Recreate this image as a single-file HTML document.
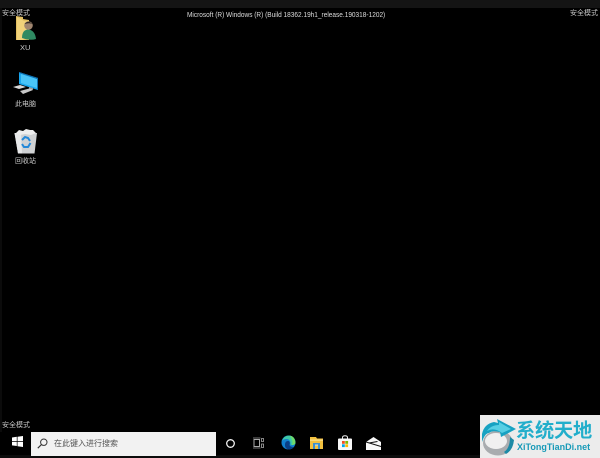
<!DOCTYPE html>
<html>
<head>
<meta charset="utf-8">
<style>
html,body{margin:0;padding:0;background:#000;}
#r{position:relative;width:600px;height:458px;overflow:hidden;background:#000;font-family:"Liberation Sans","Noto Sans CJK SC",sans-serif;color:#c8c8c8;}
.t{position:absolute;white-space:nowrap;font-size:7px;line-height:10px;}
svg{position:absolute;overflow:visible;}
</style>
</head>
<body>
<div id="r">
<div style="position:absolute;left:0;top:0;width:600px;height:8px;background:#141414"></div>
<div style="position:absolute;left:0;top:8px;width:2px;height:424px;background:#0b0b0b"></div>
<div style="position:absolute;left:0;top:455px;width:600px;height:3px;background:#0c0c0c"></div>

<div class="t" style="left:2px;top:9px">安全模式</div>
<div class="t" style="left:187px;top:9.500px;font-size:7.600px;color:#dcdcdc;transform:scaleX(.857);transform-origin:0 0">Microsoft (R) Windows (R) (Build 18362.19h1_release.190318-1202)</div>
<div class="t" style="left:570px;top:9px">安全模式</div>
<div class="t" style="left:2px;top:421px">安全模式</div>

<!-- XU folder icon -->
<svg style="left:14px;top:14px" width="24" height="28" viewBox="0 0 24 28">
<path d="M2 2 L9 3 L9 5 L15 6 L15 26 L2 26Z" fill="#e2bf61"/>
<path d="M3 3 L10 7 L15 8 L15 23 L9 26 L3 26Z" fill="#f0d27a"/>
<path d="M8 24 Q8 16 14 15.500 Q21 16 22 25 Q16 27 8 24Z" fill="#2f8a62"/>
<circle cx="14.500" cy="11.500" r="4.300" fill="#a08670"/>
<path d="M10.500 10 Q14 5.500 18.500 10 Q15 8.500 10.500 10Z" fill="#332a25"/>
</svg>
<div class="t" style="left:20px;top:43px;font-size:7.500px">XU</div>

<!-- PC icon -->
<svg style="left:12px;top:71px" width="28" height="26" viewBox="0 0 28 26">
<path d="M7 1 L26 7 L26 19 L7 13Z" fill="#19a6ee"/>
<path d="M9 3 L25 8 L25 17 L9 12Z" fill="#49c4f7"/>
<path d="M7 1 L26 7 L26 19 L25 19 L25 8 L7 2Z" fill="#0f6fb0"/>
<path d="M1 16 L8 14 L14 16 L7 18Z" fill="#d8d8d8"/>
<path d="M8 20 L19 17 L21 19 L11 23Z" fill="#c8c8c8"/>
<path d="M17 16 L21 17 L21 18.500 L17 17.500Z" fill="#9a9a9a"/>
</svg>
<div class="t" style="left:15px;top:100px">此电脑</div>

<!-- Recycle bin -->
<svg style="left:13px;top:128px" width="26" height="27" viewBox="0 0 26 27">
<path d="M1.500 5 L24 5 L21.500 25.500 L5 25.500Z" fill="#cfd1d3"/>
<path d="M1.500 5 L8 5 L9 25.500 L5 25.500Z" fill="#e8e9ea"/>
<path d="M3 5 L6 2 L10 3 L13 1 L17 2 L20 2 L23 5 L18 7 L12 6 L7 7Z" fill="#eeeeee"/>
<path d="M9 12 L12 9 L15 10 L17 13" fill="none" stroke="#2488d8" stroke-width="2"/>
<path d="M17.500 15 L15 19 L11 19 L9 16" fill="none" stroke="#2488d8" stroke-width="2"/>
</svg>
<div class="t" style="left:15px;top:157px">回收站</div>

<!-- Start icon -->
<svg style="left:12px;top:436px" width="11" height="11" viewBox="0 0 11 11">
<path d="M0 1.500 L4.800 .8 V5 H0Z M5.500 .7 L11 0 V5 H5.500Z M0 5.700 H4.800 V10 L0 9.400Z M5.500 5.700 H11 V11 L5.500 10.200Z" fill="#fff"/>
</svg>

<!-- Search box -->
<div style="position:absolute;left:31px;top:432px;width:185px;height:24px;background:#f2f2f2"></div>
<svg style="left:37px;top:438px" width="11" height="11" viewBox="0 0 11 11">
<circle cx="6.800" cy="4.200" r="3.200" fill="none" stroke="#333" stroke-width="1"/>
<path d="M4.500 6.500 L.8 10.200" stroke="#333" stroke-width="1.200"/>
</svg>
<div class="t" style="left:54px;top:439px;font-size:8px;color:#555">在此键入进行搜索</div>

<!-- Cortana -->
<svg style="left:225px;top:438px" width="11" height="11" viewBox="0 0 11 11">
<circle cx="5.500" cy="5.500" r="3.800" fill="none" stroke="#f0f0f0" stroke-width="1.300"/>
</svg>
<!-- Task view -->
<svg style="left:253px;top:438px" width="11" height="10" viewBox="0 0 11 10">
<rect x="1" y="1.500" width="5.500" height="7" fill="none" stroke="#aaa" stroke-width="1"/>
<path d="M0 0 H7.500 M0 10 H7.500" stroke="#999" stroke-width=".8"/>
<path d="M8.500 .5 H10.500 V3.500 H8.500Z M8.500 6 H10.500 V9.500 H8.500Z" fill="none" stroke="#aaa" stroke-width=".8"/>
</svg>
<!-- Edge -->
<svg style="left:281px;top:435px" width="15" height="15" viewBox="0 0 15 15">
<circle cx="7.500" cy="7.500" r="7" fill="#1180cf"/>
<path d="M1 6 Q3 .5 8 .5 Q14 1 14.500 8 Q14 10 10.500 10 Q9 10 9.500 8 Q9 4 5.500 4 Q2.500 4 1 6Z" fill="#3fc9a6"/>
<path d="M9 .7 Q14 1.500 14.500 8 Q14 10 10.800 10 Q13 7 9 .7Z" fill="#6fdc6a"/>
<path d="M4 9 Q4.500 5.500 7.500 6 Q9.500 7 8.500 10 Q9 12 12.500 12 Q10 14.800 7 14.500 Q3.500 13 4 9Z" fill="#0a3f86"/>
</svg>
<!-- Explorer -->
<svg style="left:310px;top:437px" width="13" height="12" viewBox="0 0 13 12">
<path d="M0 0 H6 L7 1.500 H13 V12 H0Z" fill="#f3c13f"/>
<rect x="0" y="2.500" width="13" height="1.300" fill="#fbe08a"/>
<path d="M3 12 V6 H10 V12 H8 V8 H5 V12Z" fill="#3a8fd0"/>
<rect x="5" y="7.500" width="3" height="1" fill="#bfe0f5"/>
</svg>
<!-- Store -->
<svg style="left:338px;top:435px" width="14" height="15" viewBox="0 0 14 15">
<path d="M4.500 4 V2.500 Q4.500 .7 7 .7 Q9.500 .7 9.500 2.500 V4" fill="none" stroke="#eee" stroke-width="1"/>
<rect x="0" y="3.500" width="14" height="11.500" rx="1" fill="#f8f8f8"/>
<rect x="4" y="6" width="2.800" height="2.800" fill="#f25022"/>
<rect x="7.300" y="6" width="2.800" height="2.800" fill="#7fba00"/>
<rect x="4" y="9.300" width="2.800" height="2.800" fill="#00a4ef"/>
<rect x="7.300" y="9.300" width="2.800" height="2.800" fill="#ffb900"/>
</svg>
<!-- Mail -->
<svg style="left:366px;top:437px" width="15" height="13" viewBox="0 0 15 13">
<path d="M0 5 L7.500 0 L15 5 V13 H0Z" fill="#f8f8f8"/>
<path d="M0 5 L15 9.500 M3 6 L11.500 4.500" stroke="#111" stroke-width="1" fill="none"/>
</svg>

<!-- Watermark -->
<div style="position:absolute;left:480px;top:415px;width:120px;height:43px;background:#ececec"></div>
<svg style="left:481px;top:418px" width="36" height="38" viewBox="0 0 36 38">
<ellipse cx="17" cy="25" rx="15" ry="12.500" fill="#a9acaf"/>
<ellipse cx="15" cy="23" rx="11" ry="8" fill="#f0f0f0"/>
<path d="M1 16 Q3 6 13 4 L17 5 L16 1 L35 11 L20 19 L19 14 Q11 12 8 15 Q4 15 1 24Z" fill="#17a2c2"/>
<path d="M6 13 Q10 7 18 7 L18 4 L30 11 L21 15 Q13 9 6 13Z" fill="#57cfe4"/>
<path d="M25 36 Q32 32 33 22 L29 19 Q29 30 23 34Z" fill="#1c8aa6"/>
</svg>
<div class="t" style="left:516px;top:417px;font-size:19.200px;line-height:24px;font-weight:bold;color:#22aecb;letter-spacing:-.2px;font-family:'Noto Sans CJK SC',sans-serif">系统天地</div>
<div class="t" style="left:517px;top:442px;font-size:9px;line-height:11px;font-weight:bold;color:#189ab8;letter-spacing:0">XiTongTianDi.net</div>
</div>
</body>
</html>
